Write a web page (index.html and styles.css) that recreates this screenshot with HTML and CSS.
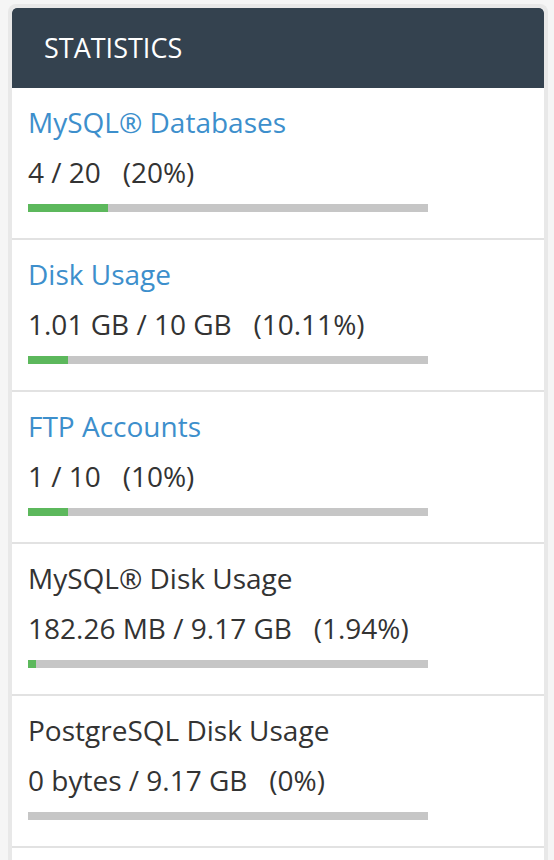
FILE: index.html
```html
<!DOCTYPE html>
<html>
<head>
<meta charset="utf-8">
<link rel="stylesheet" href="styles.css">
</head>
<body>
<div class="panel">
  <div class="panel-header">STATISTICS</div>
  <div class="stat">
    <a class="stat-title link" href="#">MySQL® Databases</a>
    <div class="stat-value">4 / 20 &nbsp; (20%)</div>
    <div class="bar"><div class="bar-fill" style="width:20%"></div></div>
  </div>
  <div class="stat">
    <a class="stat-title link" href="#">Disk Usage</a>
    <div class="stat-value">1.01 GB / 10 GB &nbsp; (10.11%)</div>
    <div class="bar"><div class="bar-fill" style="width:10.11%"></div></div>
  </div>
  <div class="stat">
    <a class="stat-title link" href="#">FTP Accounts</a>
    <div class="stat-value">1 / 10 &nbsp; (10%)</div>
    <div class="bar"><div class="bar-fill" style="width:10%"></div></div>
  </div>
  <div class="stat">
    <div class="stat-title">MySQL® Disk Usage</div>
    <div class="stat-value">182.26 MB / 9.17 GB &nbsp; (1.94%)</div>
    <div class="bar"><div class="bar-fill" style="width:1.94%"></div></div>
  </div>
  <div class="stat">
    <div class="stat-title">PostgreSQL Disk Usage</div>
    <div class="stat-value">0 bytes / 9.17 GB &nbsp; (0%)</div>
    <div class="bar"><div class="bar-fill" style="width:0%"></div></div>
  </div>
</div>
</body>
</html>
```
FILE: styles.css
```css
html, body {
  margin: 0;
  padding: 0;
}
body {
  background: #f5f5f5;
  font-family: "Open Sans", "DejaVu Sans", sans-serif;
  color: #333333;
  height: 860px;
  overflow: hidden;
}
.panel {
  margin: 4px 0 0 8px;
  width: 532px;
  height: 856px;
  border: 4px solid #e8e8e8;
  border-bottom: none;
  border-radius: 8px 8px 0 0;
  background: #ffffff;
  overflow: hidden;
}
.panel-header {
  height: 80px;
  box-sizing: border-box;
  background: #34424f;
  color: #ffffff;
  font-size: 27px;
  line-height: 80px;
  padding-left: 32px;
  border-radius: 5px 5px 0 0;
}
.stat {
  height: 152px;
  box-sizing: border-box;
  padding: 14px 14px 0 16px;
  border-bottom: 2px solid #e2e2e2;
}
.stat-title {
  display: block;
  font-size: 28px;
  line-height: 40px;
  color: #333333;
  text-decoration: none;
}
.stat-title.link {
  color: #3d8fcc;
}
.stat-value {
  margin-top: 10px;
  font-size: 28px;
  line-height: 40px;
}
.bar {
  margin-top: 12px;
  width: 400px;
  height: 8px;
  background: #c6c6c6;
}
.bar-fill {
  height: 100%;
  background: #5cb85c;
}
```
